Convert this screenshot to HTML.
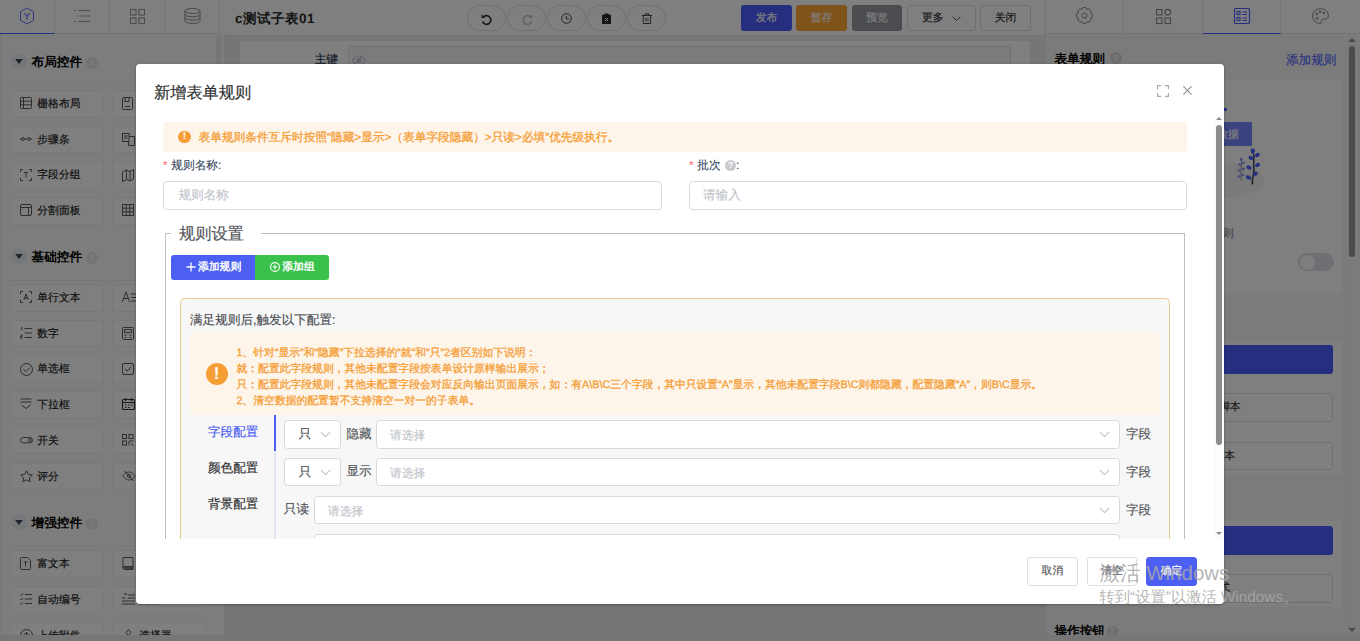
<!DOCTYPE html>
<html lang="zh">
<head>
<meta charset="utf-8">
<title>form rule</title>
<style>
*{box-sizing:border-box;margin:0;padding:0}
html,body{width:1360px;height:641px;overflow:hidden;background:#ececec;font-family:"Liberation Sans",sans-serif;}
#app{-webkit-text-stroke:.18px;text-rendering:geometricPrecision;position:absolute;left:0;top:0;width:1360px;height:641px;overflow:hidden;background:#ececec;color:#303133;font-size:10.800px}
.abs{position:absolute}
svg{display:block;overflow:visible}
/* ---------- top bar ---------- */
#topbar{position:absolute;left:0;top:0;width:1360px;height:36px;background:#fff;border-bottom:1px solid #e2e5ec}
.ltab{position:absolute;top:0;height:34px;width:55px;border-right:1px solid #e6e8f0;border-bottom:1px solid #e6e8f0}
.ltab svg{position:absolute}
#title{-webkit-text-stroke:0;position:absolute;left:235px;top:10px;font-size:13.500px;letter-spacing:.500px;line-height:17px;font-weight:bold;color:#2a2a2a}
.pill{position:absolute;top:5px;width:39.200px;height:25.600px;border:1px solid #dcdfe6;border-radius:13px;background:#fff}
.tbtn{position:absolute;top:5px;height:26px;border-radius:3px;font-size:10.800px;line-height:27.600px;text-align:center;color:#fff}
.rtab{position:absolute;top:0;height:34px;border-right:1px solid #e6e8f0;border-bottom:1px solid #e6e8f0}
/* ---------- left panel ---------- */
#left{overflow:hidden;position:absolute;left:0;top:34px;width:225px;height:601px;background:#fafafa;border-right:1px solid #e4e6ee;box-shadow:inset 1px 0 0 #eceef2}
i{font-style:normal}
.sec{position:absolute;left:0;width:215px;height:20px}
.sec .tri{position:absolute;left:10.500px;top:.500px;width:16.500px;height:16.500px;border-radius:9px;background:#eaeff4}
.sec .tri:after{content:"";position:absolute;left:4.200px;top:6.500px;border:4px solid transparent;border-top:5px solid #3c4a5e;border-bottom:0}
.sec b{-webkit-text-stroke:0;position:absolute;left:31.600px;top:2px;font-size:12.6px;color:#000;line-height:16px}
.sec .inf{position:absolute;left:86px;top:5px;width:12px;height:12px;border-radius:6px;background:#e6e7ea;color:#fbfbfb;font-size:9px;line-height:12px;text-align:center;font-weight:bold}
.it{position:absolute;width:94px;height:27.500px;background:#fff;border:1px solid #eef0f3;border-radius:3.500px;font-size:10.800px;line-height:26.400px;color:#1c1c1c;padding-left:26.300px;white-space:nowrap;overflow:hidden}
.it svg{position:absolute;left:9px;top:6.400px}
.c1{left:10px}.c2{left:112px}
/* ---------- canvas ---------- */
#page{position:absolute;left:240px;top:41px;width:790px;height:520px;background:#fff}
/* ---------- right panel ---------- */
#right{overflow:hidden;position:absolute;left:1045px;top:34px;width:315px;height:601px;background:#f6f6f6;box-shadow:inset 1px 0 0 #e6e8ee}
/* ---------- overlay ---------- */
#ov{position:absolute;left:0;top:0;width:1360px;height:641px;background:rgba(0,0,0,.5)}
/* ---------- modal ---------- */
#modal{position:absolute;left:136px;top:64px;width:1088px;height:539.5px;background:#fff;border-radius:4px;box-shadow:0 1px 3px rgba(0,0,0,.3);overflow:hidden}

/* modal inner */
#modal .ttl{position:absolute;left:18px;top:18px;font-size:16.200px;line-height:22px;color:#303133;white-space:nowrap}
.alert{position:absolute;background:#fef5ea;border-radius:3.600px;color:#f59e36;-webkit-text-stroke:.3px}
.wic{position:absolute;border-radius:50%;background:#f59e36;color:#fff;text-align:center;font-weight:bold;-webkit-text-stroke:0}
.lab{position:absolute;font-size:11.700px;line-height:16px;color:#34455a;white-space:nowrap;-webkit-text-stroke:.1px}
.lab em{font-style:normal;color:#f56c6c;margin-right:3.700px}
.inp{position:absolute;height:28.500px;border:1px solid #d6d9e1;border-radius:3.600px;background:#fff;font-size:11.700px;line-height:26.500px;color:#c3c6cd;padding-left:13.500px;white-space:nowrap}
.chev{position:absolute;top:10px}
.txt{position:absolute;font-size:12.600px;line-height:18px;color:#55575c;white-space:nowrap}
.fbtn{position:absolute;top:493.400px;height:28.200px;border:1px solid #dcdfe6;border-radius:3px;background:#fff;font-size:10.800px;line-height:27.400px;text-align:center;color:#55585e;white-space:nowrap}
#wm{position:absolute;left:1099.500px;top:0;color:rgba(168,168,168,.86);-webkit-text-stroke:0;white-space:nowrap;pointer-events:none}
.j{display:inline-block;text-align:justify;text-align-last:justify;text-justify:inter-character;white-space:nowrap;vertical-align:baseline}
</style>
</head>
<body>
<div id="app">

<!-- TOPBAR -->
<div id="topbar">
  <div class="ltab" style="left:0;border-bottom:1.600px solid #4a5cff"><svg style="left:19px;top:7px" width="16" height="18" viewBox="0 0 16 18" fill="none" stroke="#5f6fff" stroke-width="1"><path d="M8 1l6.500 3.700v8.600L8 17l-6.500-3.700V4.700z"></path><path d="M5.200 6.200L8 9l2.800-2.800M8 9v3.800" stroke-width="1.200"></path></svg></div>
  <div class="ltab" style="left:55px"><svg style="left:19px;top:9px" width="16" height="14" viewBox="0 0 16 14" fill="none" stroke="#9a9a9a" stroke-width="1.100"><path d="M0 1.500h1.500M4 1.500h12M3 7h1.500M7 7h9M0 12.500h1.500M4 12.500h12"></path></svg></div>
  <div class="ltab" style="left:110px"><svg style="left:20px;top:9px" width="15" height="15" viewBox="0 0 15 15" fill="none" stroke="#979797" stroke-width="1.100"><rect x=".5" y=".5" width="5.500" height="5.500"></rect><rect x="9" y=".5" width="5.500" height="5.500"></rect><rect x=".5" y="9" width="5.500" height="5.500"></rect><rect x="9" y="9" width="5.500" height="5.500"></rect></svg></div>
  <div class="ltab" style="left:165px"><svg style="left:19px;top:8px" width="17" height="16" viewBox="0 0 17 16" fill="none" stroke="#8a8a8a" stroke-width="1"><ellipse cx="8.500" cy="3" rx="7.500" ry="2.500"></ellipse><path d="M1 3v3.300c0 1.400 3.400 2.500 7.500 2.500s7.500-1.100 7.500-2.500V3M1 6.300v3.300c0 1.400 3.400 2.500 7.500 2.500s7.500-1.100 7.500-2.500V6.300M1 9.600v3.300c0 1.400 3.400 2.500 7.500 2.500s7.500-1.100 7.500-2.500V9.600"></path></svg></div>
  <div id="title"><span class="j" style="width: 80.03px;">c测试子表01</span></div>
  <div class="pill" style="left:466.5px"><svg style="position:absolute;left:13.500px;top:6.500px" width="11" height="12" viewBox="0 0 11 12" fill="none" stroke="#333" stroke-width="1.700"><path d="M2.200 4.300A4.300 4.300 0 1 1 1.500 8.500"></path><path d="M.6 1.300v3.600h3.600z" fill="#333" stroke="none"></path></svg></div>
  <div class="pill" style="left:506.5px"><svg style="position:absolute;left:14px;top:6.500px" width="11" height="12" viewBox="0 0 11 12" fill="none" stroke="#c0c4cc" stroke-width="1.700"><path d="M8.800 4.300A4.300 4.300 0 1 0 9.500 8.500"></path><path d="M10.400 1.300v3.600H6.800z" fill="#c0c4cc" stroke="none"></path></svg></div>
  <div class="pill" style="left:546.5px"><svg style="position:absolute;left:13.500px;top:7px" width="11" height="11" viewBox="0 0 11 11" fill="none" stroke="#444" stroke-width="1"><circle cx="5.500" cy="5.500" r="4.800"></circle><path d="M5.300 2.800v3.200h2.800"></path></svg></div>
  <div class="pill" style="left:586.5px"><svg style="position:absolute;left:14.500px;top:6.500px" width="9" height="11" viewBox="0 0 9 11"><path d="M0 1.700h2.500V.6h4v1.100H9V11H0z" fill="#2a2a2a"></path><path d="M3 5l3 3M6 5L3 8" stroke="#fff" stroke-width="1" fill="none"></path></svg></div>
  <div class="pill" style="left:626.5px"><svg style="position:absolute;left:14px;top:6.500px" width="10" height="11" viewBox="0 0 10 11" fill="none" stroke="#444" stroke-width="1"><path d="M0 2.500h10M3.300 2.500V.8h3.400v1.700M1.300 2.500v8h7.400v-8M4 4.800v3.600M6 4.800v3.600"></path></svg></div>
  <div class="tbtn" style="left:741px;width:51px;background:#4a5cff"><span class="j" style="width: 21.59px;">发布</span></div>
  <div class="tbtn" style="left:796px;width:51px;background:#ffa838"><span class="j" style="width: 21.59px;">暂存</span></div>
  <div class="tbtn" style="left:852px;width:50px;background:#96989e"><span class="j" style="width: 21.59px;">预览</span></div>
  <div class="tbtn" style="left:907px;width:69px;border:1px solid #dcdfe6;color:#333;line-height:25.600px;text-align:left;padding-left:14px"><span class="j" style="width: 21.59px;">更多</span><svg style="position:absolute;left:44px;top:10px" width="9" height="5.500" viewBox="0 0 10 6" fill="none" stroke="#444" stroke-width="1"><path d="M.7 .7L5 5 9.300 .7"></path></svg></div>
  <div class="tbtn" style="left:980px;width:51px;border:1px solid #dcdfe6;color:#333;line-height:25.600px"><span class="j" style="width: 21.59px;">关闭</span></div>
  <div class="rtab" style="left:1045px;width:79px;border-left:1px solid #e6e6e6"><svg style="position:absolute;left:30px;top:7.300px" width="17" height="17" viewBox="0 0 17 17" fill="none" stroke="#8a8a8a" stroke-width="1" stroke-linejoin="round"><path d="M5.94 2.31L7.12 0.62L9.88 0.62L11.06 2.31L13.10 1.95L15.05 3.90L14.69 5.94L16.38 7.12L16.38 9.88L14.69 11.06L15.05 13.10L13.10 15.05L11.06 14.69L9.88 16.38L7.12 16.38L5.94 14.69L3.90 15.05L1.95 13.10L2.31 11.06L0.62 9.88L0.62 7.12L2.31 5.94L1.95 3.90L3.90 1.95L5.94 2.31z"></path><circle cx="8.500" cy="8.500" r="2.600"></circle></svg></div>
  <div class="rtab" style="left:1124px;width:79px"><svg style="position:absolute;left:32px;top:9px" width="15" height="15" viewBox="0 0 15 15" fill="none" stroke="#8a8a8a" stroke-width="1.100"><rect x=".5" y=".5" width="5.500" height="5.500"></rect><circle cx="11.800" cy="3.200" r="2.800"></circle><rect x=".5" y="9" width="5.500" height="5.500"></rect><rect x="9" y="9" width="5.500" height="5.500"></rect></svg></div>
  <div class="rtab" style="left:1203px;width:78px;border-bottom:1.600px solid #4a5cff"><svg style="position:absolute;left:30.500px;top:8px" width="16" height="16" viewBox="0 0 16 16" fill="none" stroke="#4a5cff" stroke-width="1.100"><rect x=".5" y=".5" width="15" height="15" rx="1"></rect><rect x="3" y="3.500" width="3" height="3"></rect><rect x="3" y="9.500" width="3" height="3"></rect><path d="M8.500 4h4.500M8.500 6.500h4.500M8.500 10h4.500M8.500 12.500h4.500"></path></svg></div>
  <div class="rtab" style="left:1281px;width:79px;border-right:0"><svg style="position:absolute;left:31px;top:8px" width="17" height="16" viewBox="0 0 17 16" fill="none" stroke="#8a8a8a" stroke-width="1"><path d="M8.500 .6C4 .6 .6 3.900 .6 8s3.400 7.400 7.400 7.400c1.600 0 2-.900 1.600-1.900-.5-1.300.2-2.500 1.700-2.500h2.300c1.700 0 2.800-1.300 2.800-3.200C16.400 3.600 12.900.6 8.500.6z"></path><circle cx="4.600" cy="6" r="1"></circle><circle cx="8" cy="3.800" r="1"></circle><circle cx="11.800" cy="5" r="1"></circle><circle cx="5" cy="10.300" r="1"></circle></svg></div>
</div>

<!-- LEFT PANEL -->
<div id="left">
<div class="abs" style="left:0;top:51px;width:215px;height:1px;background:#eff1f4"></div>
<div class="abs" style="left:0;top:246px;width:215px;height:1px;background:#eff1f4"></div>
<div class="abs" style="left:0;top:512px;width:215px;height:1px;background:#eff1f4"></div>
<div class="sec" style="top:18px"><i class="tri"></i><b><span class="j" style="width: 50.38px;">布局控件</span></b><i class="inf">!</i></div>
<div class="it c1" style="top:56.0px"><svg width="12" height="12" viewBox="0 0 12 12" stroke="#5c5c5c" stroke-width="1" fill="none"><rect x=".5" y=".5" width="11" height="11" rx="1"></rect><path d="M3.5 .5v11M.5 4.2h11M.5 7.8h11"></path></svg><span class="j" style="width: 43.19px;">栅格布局</span></div>
<div class="it c2" style="top:56.0px"><svg width="12" height="13" viewBox="0 0 12 13" stroke="#5c5c5c" stroke-width="1" fill="none"><rect x=".5" y=".5" width="10" height="12" rx="1"></rect><path d="M3 .5v4h4v-4M3 9.500h5"></path></svg><span class="j" style="width: 21.59px;">表单</span></div>
<div class="it c1" style="top:91.7px"><svg width="12" height="12" viewBox="0 0 12 12" stroke="#5c5c5c" stroke-width="1" fill="none"><path d="M0 6h1.5M4.5 6h3M10.5 6H12"></path><circle cx="3" cy="6" r="1.4"></circle><circle cx="9" cy="6" r="1.4"></circle></svg><span class="j" style="width: 32.39px;">步骤条</span></div>
<div class="it c2" style="top:91.7px"><svg width="13" height="13" viewBox="0 0 13 13" stroke="#5c5c5c" stroke-width="1" fill="none"><rect x=".5" y=".5" width="6.500" height="8"></rect><path d="M2 3h3.500M2 5h3.500M7 3.500h5.500v9h-6v-4"></path></svg><span class="j" style="width: 21.59px;">标签</span></div>
<div class="it c1" style="top:127.4px"><svg width="12" height="12" viewBox="0 0 12 12" stroke="#5c5c5c" stroke-width="1" fill="none"><path d="M3 .5H.5V3M9 .5h2.5V3M3 11.5H.5V9M9 11.5h2.5V9M4 3.5h4M6 3.5v5"></path></svg><span class="j" style="width: 43.19px;">字段分组</span></div>
<div class="it c2" style="top:127.4px"><svg width="12" height="13" viewBox="0 0 12 13" stroke="#5c5c5c" stroke-width="1" fill="none"><path d="M.5 3l4-2v9.500l-4 2zM4.500 1l3.500 1.500 3.500-2v9.500l-3.500 2-3.500-1.500M8 2.500V12"></path></svg><span class="j" style="width: 21.59px;">折叠</span></div>
<div class="it c1" style="top:163.1px"><svg width="12" height="12" viewBox="0 0 12 12" stroke="#5c5c5c" stroke-width="1" fill="none"><rect x=".5" y=".5" width="11" height="11" rx="1.5"></rect><path d="M.5 3.5h11M8.5 3.5v8"></path></svg><span class="j" style="width: 43.19px;">分割面板</span></div>
<div class="it c2" style="top:163.1px"><svg width="12" height="12" viewBox="0 0 12 12" stroke="#5c5c5c" stroke-width="1" fill="none"><rect x=".5" y=".5" width="11" height="11"></rect><path d="M4.200 .5v11M7.800 .5v11M.5 4.200h11M.5 7.800h11"></path></svg><span class="j" style="width: 21.59px;">表格</span></div>
<div class="sec" style="top:213px"><i class="tri"></i><b><span class="j" style="width: 50.38px;">基础控件</span></b><i class="inf">!</i></div>
<div class="it c1" style="top:250.0px"><svg width="12" height="12" viewBox="0 0 12 12" stroke="#5c5c5c" stroke-width="1" fill="none"><path d="M3 .5H.5V3M9 .5h2.5V3M3 11.5H.5V9M9 11.5h2.5V9M3.8 9l2.2-6 2.2 6M4.6 7h2.8"></path></svg><span class="j" style="width: 43.19px;">单行文本</span></div>
<div class="it c2" style="top:250.0px"><svg width="14" height="12" viewBox="0 0 14 12" stroke="#5c5c5c" stroke-width="1" fill="none"><path d="M.3 11L4 1l3.700 10M1.600 7.500h4.800M9 3h5M9 6.500h5M9 10h5"></path></svg><span class="j" style="width: 21.59px;">多行</span></div>
<div class="it c1" style="top:285.7px"><svg width="12" height="12" viewBox="0 0 12 12" stroke="#5c5c5c" stroke-width="1" fill="none"><path d="M4.5 1.5H12M4.5 6H12M4.5 10.5H12M1 .5h.8v2.8M.6 8.2h1.6v1.3H.6v1.6h1.8"></path></svg><span class="j" style="width: 21.59px;">数字</span></div>
<div class="it c2" style="top:285.7px"><svg width="12" height="13" viewBox="0 0 12 13" stroke="#5c5c5c" stroke-width="1" fill="none"><rect x=".5" y=".5" width="11" height="12" rx="1"></rect><rect x="2.500" y="2.500" width="7" height="3"></rect><path d="M2.500 8h2M7.500 8h2M2.500 10.500h2M7.500 10.500h2"></path></svg><span class="j" style="width: 21.59px;">计算</span></div>
<div class="it c1" style="top:321.4px"><svg width="13" height="13" viewBox="0 0 13 13" stroke="#5c5c5c" stroke-width="1" fill="none"><circle cx="6.5" cy="6.5" r="6"></circle><path d="M3.6 6.6l2.2 2.1 3.8-4"></path></svg><span class="j" style="width: 32.39px;">单选框</span></div>
<div class="it c2" style="top:321.4px"><svg width="12" height="12" viewBox="0 0 12 12" stroke="#5c5c5c" stroke-width="1" fill="none"><rect x=".5" y=".5" width="11" height="11" rx="1.500"></rect><path d="M3 6l2.200 2.200L9.200 3.800"></path></svg><span class="j" style="width: 21.59px;">复选</span></div>
<div class="it c1" style="top:357.1px"><svg width="12" height="12" viewBox="0 0 12 12" stroke="#5c5c5c" stroke-width="1" fill="none"><path d="M.5 1h11M.5 4h11M1.5 7l4.5 3.5L10.500 7"></path></svg><span class="j" style="width: 32.39px;">下拉框</span></div>
<div class="it c2" style="top:357.1px"><svg width="13" height="12" viewBox="0 0 13 12" stroke="#333" stroke-width="1.100" fill="none"><rect x=".5" y="1.500" width="12" height="10" rx="1"></rect><path d="M.5 4.500h12M3.500 0v3M9.500 0v3M3 7h1.500M6 7h1.500M9 7h1.500M3 9.500h1.500M6 9.500h1.500"></path></svg><span class="j" style="width: 21.59px;">日期</span></div>
<div class="it c1" style="top:392.8px"><svg width="13" height="12" viewBox="0 0 13 12" stroke="#5c5c5c" stroke-width="1" fill="none"><rect x=".5" y="3.5" width="12" height="5.4" rx="2.7"></rect><circle cx="9.8" cy="6.2" r="1.5"></circle></svg><span class="j" style="width: 21.59px;">开关</span></div>
<div class="it c2" style="top:392.8px"><svg width="12" height="12" viewBox="0 0 12 12" stroke="#5c5c5c" stroke-width="1" fill="none"><rect x=".5" y=".5" width="4" height="4"></rect><rect x="7" y=".5" width="4" height="4"></rect><rect x=".5" y="7" width="4" height="4"></rect><path d="M7 7h4.500M7 7v4.500M9 9.500l2.500 2"></path></svg><span class="j" style="width: 21.59px;">扫码</span></div>
<div class="it c1" style="top:428.5px"><svg width="13" height="12" viewBox="0 0 13 12" stroke="#5c5c5c" stroke-width="1" fill="none"><path d="M6.5 .8l1.8 3.6 4 .6-2.900 2.800.700 4-3.600-1.900-3.600 1.900.700-4L.700 5l4-.6z" stroke-linejoin="round"></path></svg><span class="j" style="width: 21.59px;">评分</span></div>
<div class="it c2" style="top:428.5px"><svg width="14" height="12" viewBox="0 0 14 12" stroke="#777" stroke-width="1" fill="none"><path d="M.8 6C2.500 3.300 4.700 2 7 2s4.500 1.300 6.200 4C11.500 8.700 9.300 10 7 10S2.500 8.700.8 6z"></path><circle cx="7" cy="6" r="1.800"></circle><path d="M2.500 1l9 10" stroke="#5c5c5c"></path></svg><span class="j" style="width: 21.59px;">隐藏</span></div>
<div class="sec" style="top:479px"><i class="tri"></i><b><span class="j" style="width: 50.38px;">增强控件</span></b><i class="inf">!</i></div>
<div class="it c1" style="top:516.0px"><svg width="11" height="13" viewBox="0 0 11 13" stroke="#5c5c5c" stroke-width="1" fill="none"><path d="M.5 1.500a1 1 0 0 1 1-1h6l3 3v8a1 1 0 0 1-1 1h-8a1 1 0 0 1-1-1zM3.500 5h4M5.500 5v4.500"></path></svg><span class="j" style="width: 32.39px;">富文本</span></div>
<div class="it c2" style="top:516.0px"><svg width="12" height="13" viewBox="0 0 12 13" stroke="#5c5c5c" stroke-width="1" fill="none"><path d="M1 .5h10v9H2.500a1.500 1.500 0 0 0 0 3H11v-3M1 11V.5"></path><path d="M2 11h9" stroke-width="1.600"></path></svg><span class="j" style="width: 21.59px;">手册</span></div>
<div class="it c1" style="top:551.8px"><svg width="12" height="12" viewBox="0 0 12 12" stroke="#5c5c5c" stroke-width="1" fill="none"><path d="M5 1.500h7M5 6h7M5 10.500h7M.3 1.500l1 1 1.700-2M.3 6l1 1 1.700-2M.3 10.500l1 1 1.700-2"></path></svg><span class="j" style="width: 43.19px;">自动编号</span></div>
<div class="it c2" style="top:551.8px"><svg width="13" height="12" viewBox="0 0 13 12" stroke="#5c5c5c" stroke-width="1" fill="none"><path d="M0 5h3.200M0 8h13M0 11h13M2 2l1.500-2L5 2M6 2h7M6 5h7"></path></svg><span class="j" style="width: 21.59px;">文本</span></div>
<div class="it c1" style="top:587.6px"><svg width="13" height="13" viewBox="0 0 13 13" stroke="#5c5c5c" stroke-width="1" fill="none"><circle cx="6.5" cy="6.500" r="6"></circle><path d="M6.500 10V3.500M3.800 6l2.700-2.700L9.200 6"></path></svg><span class="j" style="width: 43.19px;">上传附件</span></div>
<div class="it c2" style="top:587.6px"><svg width="13" height="12" viewBox="0 0 13 12" stroke="#5c5c5c" stroke-width="1" fill="none"><path d="M6.500 .5l2.500 3-2.500 3-2.500-3zM.5 11.500l2.500-5 2.500 5zM8 7.500h4.500v4H8z"></path></svg><span class="j" style="width: 32.39px;">选择器</span></div>

<div class="abs" style="left:216.200px;top:2.200px;width:5.600px;height:480px;background:#ededed;border-radius:3px"></div>
</div>

<!-- CANVAS -->
<div id="page">
  <div class="abs" style="left:74px;top:12px;width:24px;text-align:right;font-size:11.700px;color:#2b3a4d;white-space:nowrap"><span class="j" style="width: 23.38px;">主键</span></div>
  <div class="abs" style="left:107.800px;top:5px;width:663.700px;height:29px;border:1px solid #dfe2ea;border-radius:3px;background:#f5f7fa">
    <svg style="position:absolute;left:3.500px;top:7.500px" width="14" height="11" viewBox="0 0 14 11" fill="none" stroke="#c0c4cc" stroke-width="1.100"><path d="M.5 5.500C2.500 2 5 1 7 1s4.500 1 6.500 4.500C11.500 9 9 10 7 10S2.500 9 .5 5.500zM2.500 10L11 .5"></path><circle cx="7" cy="5.500" r="2" fill="#c0c4cc"></circle></svg>
  </div>
</div>

<!-- RIGHT PANEL -->
<div id="right">
  <div class="abs" style="left:9.500px;top:15.500px;font-size:12.600px;font-weight:bold;-webkit-text-stroke:0;color:#000;line-height:18px"><span class="j" style="width: 50.38px;">表单规则</span></div>
  <div class="abs" style="left:65px;top:18px;width:12px;height:12px;border-radius:6px;background:#d9dadd;color:#fbfbfb;font-size:9px;font-weight:bold;line-height:12px;text-align:center">?</div>
  <div class="abs" style="left:241px;top:16.500px;font-size:12.600px;color:#5468ff;line-height:18px"><span class="j" style="width: 50.38px;">添加规则</span></div>
  <div class="abs" style="left:0;top:45.800px;width:302px;height:1px;background:#eef0f4"></div>
  <!-- card 1 -->
  <div class="abs" style="left:0;top:46px;width:297px;height:214px;background:#fff;border-radius:3px"></div>
  <div class="abs" style="left:150px;top:88px;width:57.300px;height:24px;background:#7486ff;color:#fff;font-size:10.800px;line-height:26px;text-align:right;padding-right:13.500px;white-space:nowrap;overflow:hidden"><span class="j" style="width: 21.59px;">数据</span></div>
  <div class="abs" style="left:139px;top:129px;width:80px;height:35px;border-radius:50%;background:#f4f4f5"></div><div class="abs" style="left:178px;top:73.500px;width:4px;height:3.500px;border-radius:1px;background:#4a62ff"></div>
  <svg class="abs" style="left:192px;top:112px" width="28" height="42" viewBox="0 0 28 42"><path d="M16.500 8c1.800 6-1 9 .3 14s-2.500 8-1.300 16.500" stroke="#3a3a48" stroke-width="1.500" fill="none"></path><g fill="#4a62ff"><path d="M15.800 2.500c1.800 0 2.600 1.500 2 3.200-.4 1.300-1.400 2.300-2 2.600-.800-.5-1.700-1.600-2-2.800-.5-1.700.3-3 2-3z"></path><ellipse cx="20.300" cy="9" rx="2.600" ry="2" transform="rotate(-30 20.300 9)"></ellipse><ellipse cx="14" cy="12" rx="2.600" ry="2" transform="rotate(25 14 12)"></ellipse><ellipse cx="20.500" cy="19" rx="2.700" ry="2" transform="rotate(-25 20.500 19)"></ellipse><ellipse cx="12" cy="21.500" rx="2.700" ry="2" transform="rotate(25 12 21.500)"></ellipse><ellipse cx="18.200" cy="27.800" rx="2.700" ry="2" transform="rotate(-25 18.200 27.800)"></ellipse><ellipse cx="11.500" cy="31.500" rx="2.700" ry="2" transform="rotate(25 11.500 31.500)"></ellipse></g><path d="M4.300 14c.800 5-1 9 0 20.500" stroke="#8e8ea0" stroke-width="1" fill="none"></path><g fill="#8c9af0"><ellipse cx="4.300" cy="13.300" rx="1.300" ry="1.700"></ellipse><ellipse cx="6.300" cy="16.600" rx="1.600" ry="1.200"></ellipse><ellipse cx="2.700" cy="18.500" rx="1.600" ry="1.200"></ellipse><ellipse cx="6.500" cy="23" rx="1.600" ry="1.200"></ellipse><ellipse cx="2.200" cy="24.500" rx="1.600" ry="1.200"></ellipse><ellipse cx="5.800" cy="29" rx="1.600" ry="1.200"></ellipse><ellipse cx="2" cy="30.500" rx="1.600" ry="1.200"></ellipse></g></svg>
  <div class="abs" style="left:142px;top:192.500px;font-size:11.700px;color:#8c939d;white-space:nowrap"><span class="j" style="width: 46.75px;">暂无规则</span></div>
  <div class="abs" style="left:253px;top:219px;width:36px;height:18px;border-radius:9px;background:#dcdfe6"><i class="abs" style="left:1.500px;top:1.500px;width:15px;height:15px;border-radius:8px;background:#fff"></i></div>
  <!-- card 2 -->
  <div class="abs" style="left:0;top:307px;width:297px;height:134px;background:#fff;border-radius:3px"></div>
  <div class="abs" style="left:100px;top:311px;width:188px;height:29px;background:#4a5cff;border-radius:3px"></div>
  <div class="abs" style="left:100px;top:359px;width:188px;height:28.500px;border:1px solid #dcdfe6;border-radius:3px;font-size:10.800px;line-height:26px;color:#333;white-space:nowrap"><span class="abs" style="right:91.500px;top:0"><span class="j" style="width: 43.19px;">前置脚本</span></span></div>
  <div class="abs" style="left:100px;top:407.500px;width:188px;height:28.500px;border:1px solid #dcdfe6;border-radius:3px;font-size:10.800px;line-height:26px;color:#333;white-space:nowrap"><span class="abs" style="right:97px;top:0"><span class="j" style="width: 43.19px;">后置脚本</span></span></div>
  <!-- card 3 -->
  <div class="abs" style="left:0;top:487px;width:297px;height:86px;background:#fff;border-radius:3px"></div>
  <div class="abs" style="left:100px;top:492px;width:188px;height:29px;background:#4a5cff;border-radius:3px"></div>
  <div class="abs" style="left:100px;top:540px;width:188px;height:28.500px;border:1px solid #dcdfe6;border-radius:3px;font-size:10.800px;line-height:26px;color:#333;white-space:nowrap"><span class="abs" style="right:102px;top:0"><span class="j" style="width: 53.98px;">自定义样式</span></span></div>
  <div class="abs" style="left:9.500px;top:588px;font-size:12.600px;font-weight:bold;-webkit-text-stroke:0;color:#000;line-height:18px"><span class="j" style="width: 50.38px;">操作按钮</span></div>
  <div class="abs" style="left:61.500px;top:592px;width:11px;height:11px;border-radius:6px;background:#d9dadd;color:#fbfbfb;font-size:9px;font-weight:bold;line-height:11px;text-align:center">?</div>
  <!-- scrollbar -->
  <div class="abs" style="left:302.500px;top:0;width:9.500px;height:601px;background:#f4f4f4;border-left:1px solid #f0f0f0;border-right:1px solid #fafafa"></div>
  <div class="abs" style="left:304.300px;top:11.600px;width:5.700px;height:211px;background:#979797;border-radius:3px"></div>
  <div class="abs" style="left:303px;top:3.500px;border:4px solid transparent;border-bottom:4px solid #9a9a9a;border-top:0"></div>
  <div class="abs" style="left:303px;top:593.500px;border:4px solid transparent;border-top:4px solid #9a9a9a;border-bottom:0"></div>
</div>

<div id="ov"></div>

<!-- MODAL -->
<div id="modal">
  <div class="ttl"><span class="j" style="width: 97.13px;">新增表单规则</span></div>
  <svg class="abs" style="left:1020.500px;top:20.500px" width="12" height="12" viewBox="0 0 12 12" fill="none" stroke="#a4a8b1" stroke-width="1.200"><path d="M.6 4V.6H4M8 .6h3.400V4M11.400 8v3.400H8M4 11.400H.6V8"></path></svg>
  <svg class="abs" style="left:1047px;top:22px" width="9" height="9" viewBox="0 0 9 9" fill="none" stroke="#8a8d94" stroke-width="1.100"><path d="M.4 .4l8.200 8.200M8.600 .4L.4 8.600"></path></svg>
  <div id="body" class="abs" style="left:0;top:50px;width:1088px;height:425px;overflow:hidden">
   <div class="abs" style="left:0;top:-50px;width:1088px;height:600px">
    <div class="alert" style="left:27px;top:58px;width:1024px;height:29.500px;font-size:11.700px;line-height:31.300px;padding-left:35.500px;white-space:nowrap"><i class="wic" style="left:15px;top:8.500px;width:12.600px;height:12.600px;font-size:10px;line-height:12.600px">!</i><span class="j" style="width: 420.78px;">表单规则条件互斥时按照“隐藏&gt;显示&gt;（表单字段隐藏）&gt;只读&gt;必填”优先级执行。</span></div>
    <div class="lab" style="left:27px;top:94px"><em>*</em><span class="j" style="width: 50px;">规则名称:</span></div>
    <div class="inp" style="left:27px;top:117.200px;width:499px;font-size:12.600px;padding-left:14.500px"><span class="j" style="width: 50.38px;">规则名称</span></div>
    <div class="lab" style="left:553px;top:94px"><em>*</em><span class="j" style="width: 23.38px;">批次</span><i style="display:inline-block;width:10.500px;height:10.500px;border-radius:6px;background:#c8c9cc;color:#fff;font-size:8.500px;font-weight:bold;line-height:10.500px;text-align:center;margin:0 0 0 4.800px;vertical-align:1px;-webkit-text-stroke:0">?</i>:</div>
    <div class="inp" style="left:553px;top:117.200px;width:498px;font-size:12.600px;padding-left:13px"><span class="j" style="width: 37.78px;">请输入</span></div>
    <!-- fieldset -->
    <div class="abs" style="left:28.500px;top:169px;width:1020.500px;height:400px;border:1px solid #bfbfbf;border-bottom:0"></div>
    <div class="abs" style="left:35px;top:158px;width:90px;height:22px;background:#fff;font-size:16.200px;line-height:24px;color:#55575c;padding-left:8px;white-space:nowrap"><span class="j" style="width: 64.75px;">规则设置</span></div>
    <div class="abs" style="left:35px;top:191px;width:84px;height:24.500px;background:#4d5ff2;border-radius:3px 0 0 3px;color:#fff;font-size:10.800px;-webkit-text-stroke:.4px;line-height:24.500px;white-space:nowrap;padding-left:27px"><svg class="abs" style="left:15px;top:6.800px" width="10" height="10" viewBox="0 0 10 10" stroke="#fff" stroke-width="1.300"><path d="M5 .5v9M.5 5h9"></path></svg><span class="j" style="width: 43.19px;">添加规则</span></div>
    <div class="abs" style="left:119.300px;top:191px;width:73.900px;height:24.500px;background:#38c24c;border-radius:0 3px 3px 0;color:#fff;font-size:10.800px;-webkit-text-stroke:.4px;line-height:24.500px;white-space:nowrap;padding-left:27px"><svg class="abs" style="left:14.500px;top:7px" width="10" height="10" viewBox="0 0 10 10" stroke="#fff" stroke-width="1.100" fill="none"><circle cx="5" cy="5" r="4.400"></circle><path d="M5 2.800v4.400M2.800 5h4.400"></path></svg><span class="j" style="width: 32.39px;">添加组</span></div>
    <!-- inner box -->
    <div class="abs" style="left:44px;top:234px;width:990px;height:360px;border:1px solid #ecc98c;border-radius:4.500px;background:#f7f7f7"></div>
    <div class="abs" style="left:54px;top:246.500px;font-size:12.600px;line-height:18px;color:#4c4e52;white-space:nowrap"><span class="j" style="width: 145.53px;">满足规则后,触发以下配置:</span></div>
    <div class="alert" style="left:54px;top:268px;width:969.500px;height:82.500px;font-size:10.800px;line-height:16px;padding:12.500px 0 0 46.500px;white-space:nowrap;border-radius:4.500px"><i class="wic" style="left:15.500px;top:30.500px;width:22px;height:22px;font-size:17px;line-height:22px">!</i><span class="j" style="width: 299.91px;">1、针对“显示”和“隐藏”下拉选择的“就”和“只”2者区别如下说明：</span><br><span class="j" style="width: 313.11px;">就：配置此字段规则，其他未配置字段按表单设计原样输出展示；</span><br><span class="j" style="width: 805.58px;">只：配置此字段规则，其他未配置字段会对应反向输出页面展示，如：有A\B\C三个字段，其中只设置“A”显示，其他未配置字段B\C则都隐藏，配置隐藏“A”，则B\C显示。</span><br><span class="j" style="width: 243.55px;">2、清空数据的配置暂不支持清空一对一的子表单。</span></div>
    <!-- tabs -->
    <div class="txt" style="left:72px;top:359px;color:#4d5ff2"><span class="j" style="width: 50.38px;">字段配置</span></div>
    <div class="txt" style="left:72px;top:395px;color:#303133"><span class="j" style="width: 50.38px;">颜色配置</span></div>
    <div class="txt" style="left:72px;top:431px;color:#303133"><span class="j" style="width: 50.38px;">背景配置</span></div>
    <div class="abs" style="left:138.300px;top:351px;width:2px;height:240px;background:#e1e6f5"></div>
    <div class="abs" style="left:138.300px;top:351px;width:2px;height:35.500px;background:#4d5ff2"></div>
<div class="inp" style="left:147.800px;top:356.1px;width:57.500px;color:#55575c;padding-left:14px;font-size:12.600px">只<svg class="chev" style="left:35px" width="11" height="7" viewBox="0 0 11 7" fill="none" stroke="#c0c4cc" stroke-width="1.100"><path d="M.8 .8L5.500 5.600 10.200 .8"></path></svg></div><div class="txt" style="left:210.500px;top:360.6px"><span class="j" style="width: 25.19px;">隐藏</span></div><div class="inp" style="left:239.500px;top:356.1px;width:744px;line-height:30.500px"><span class="j" style="width: 35.06px;">请选择</span><svg class="chev" style="left:722.5px" width="11" height="7" viewBox="0 0 11 7" fill="none" stroke="#c0c4cc" stroke-width="1.100"><path d="M.8 .8L5.500 5.600 10.200 .8"></path></svg></div><div class="txt" style="left:990px;top:361.1px"><span class="j" style="width: 25.19px;">字段</span></div>
<div class="inp" style="left:147.800px;top:393.9px;width:57.500px;color:#55575c;padding-left:14px;font-size:12.600px">只<svg class="chev" style="left:35px" width="11" height="7" viewBox="0 0 11 7" fill="none" stroke="#c0c4cc" stroke-width="1.100"><path d="M.8 .8L5.500 5.600 10.200 .8"></path></svg></div><div class="txt" style="left:210.500px;top:398.4px"><span class="j" style="width: 25.19px;">显示</span></div><div class="inp" style="left:239.500px;top:393.9px;width:744px;line-height:30.500px"><span class="j" style="width: 35.06px;">请选择</span><svg class="chev" style="left:722.5px" width="11" height="7" viewBox="0 0 11 7" fill="none" stroke="#c0c4cc" stroke-width="1.100"><path d="M.8 .8L5.500 5.600 10.200 .8"></path></svg></div><div class="txt" style="left:990px;top:398.9px"><span class="j" style="width: 25.19px;">字段</span></div>
<div class="txt" style="left:147.800px;top:436.2px"><span class="j" style="width: 25.19px;">只读</span></div><div class="inp" style="left:177.500px;top:431.7px;width:806px;line-height:30.500px"><span class="j" style="width: 35.06px;">请选择</span><svg class="chev" style="left:784.5px" width="11" height="7" viewBox="0 0 11 7" fill="none" stroke="#c0c4cc" stroke-width="1.100"><path d="M.8 .8L5.500 5.600 10.200 .8"></path></svg></div><div class="txt" style="left:990px;top:436.7px"><span class="j" style="width: 25.19px;">字段</span></div>
<div class="inp" style="left:177.500px;top:469.5px;width:806px;line-height:30.500px"><span class="j" style="width: 35.06px;">请选择</span><svg class="chev" style="left:784.5px" width="11" height="7" viewBox="0 0 11 7" fill="none" stroke="#c0c4cc" stroke-width="1.100"><path d="M.8 .8L5.500 5.600 10.200 .8"></path></svg></div><div class="txt" style="left:990px;top:474.5px"><span class="j" style="width: 25.19px;">字段</span></div>
   </div>
   <!-- scrollbar -->
   <div class="abs" style="left:1078px;top:0;width:10px;height:425px;background:#fff"></div><div class="abs" style="left:1078.200px;top:-1px;width:8.600px;height:427px;background:#fcfcfc"></div>
   <div class="abs" style="left:1080.200px;top:11px;width:5.800px;height:320px;background:#8c8c8c;border-radius:3px"></div>
   <div class="abs" style="left:1080px;top:2.800px;border:3px solid transparent;border-bottom:3.200px solid #8a8a8a;border-top:0"></div>
   <div class="abs" style="left:1080px;top:417.500px;border:3px solid transparent;border-top:3.200px solid #8a8a8a;border-bottom:0"></div>
  </div>
  <div class="fbtn" style="left:891px;width:50.800px"><span class="j" style="width: 21.59px;">取消</span></div>
  <div class="fbtn" style="left:951.300px;width:49.700px"><span class="j" style="width: 21.59px;">清空</span></div>
  <div class="fbtn" style="left:1010px;width:51px;background:#4d5ff2;border-color:#4d5ff2;color:#fff"><span class="j" style="width: 21.59px;">确定</span></div>
</div>
<div id="wm"><div class="abs" style="left:0;top:559.500px;font-size:20.500px;line-height:28px"><span class="j" style="width: 129.86px;">激活 Windows</span></div><div class="abs" style="left:0;top:587.500px;font-size:15.300px;line-height:20px"><span class="j" style="width: 198.88px;">转到“设置”以激活 Windows。</span></div></div>

</div>
</body>
</html>
